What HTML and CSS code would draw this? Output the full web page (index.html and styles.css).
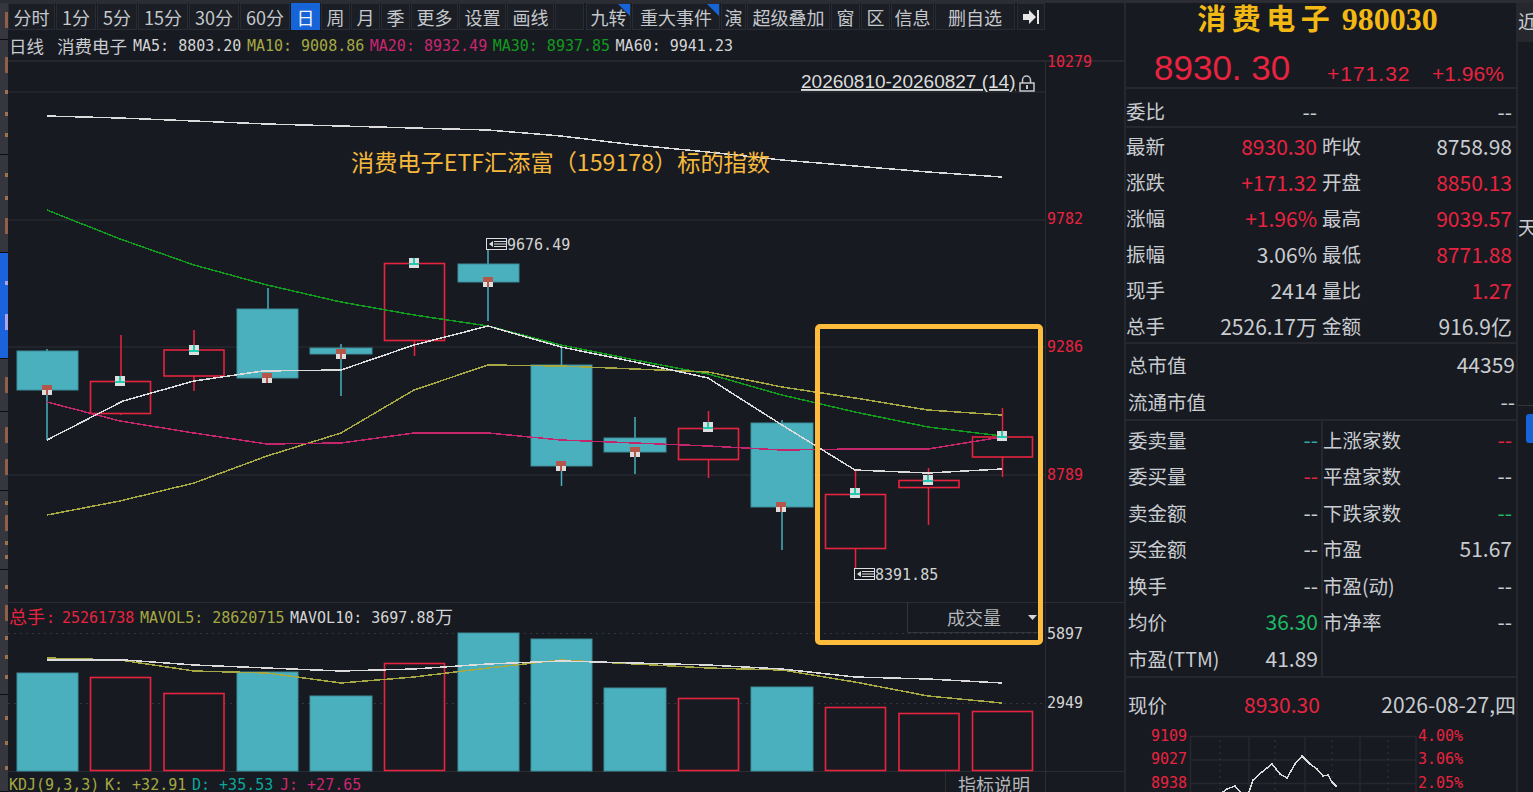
FILE: index.html
```html
<!DOCTYPE html>
<html>
<head>
  <title>消费电子 980030</title>
  <link rel="stylesheet" href="styles.css">
</head>
<body>
<div class="app">

  <div class="side">
    <div class="tab"><i class="lg"></i></div>
    <div class="tab"><i class="lg"></i><i></i><i></i><i></i></div>
    <div class="tab"><i></i><i></i><i class="lg"></i></div>
    <div class="tab active"><i></i><i class="lg"></i></div>
    <div class="tab"><i class="lg"></i></div>
    <div class="tab"><i class="lg"></i><i class="lg"></i></div>
    <div class="tab"><i></i><i class="lg"></i><i></i><i></i></div>
    <div class="tab"><i></i><i class="lg"></i><i></i><i></i><i></i></div>
    <div class="tab"><i></i><i></i><i></i></div>
  </div>

  <div class="main">
    <div class="toolbar">
      <span class="btn">分时</span>
      <span class="btn num">1分</span>
      <span class="btn num">5分</span>
      <span class="btn num">15分</span>
      <span class="btn num">30分</span>
      <span class="btn num">60分</span>
      <span class="btn on">日</span>
      <span class="btn">周</span>
      <span class="btn">月</span>
      <span class="btn">季</span>
      <span class="btn">更多</span>
      <span class="btn">设置</span>
      <span class="btn">画线</span>
      <span class="btn blank"></span>
      <span class="btn flag">九转</span>
      <span class="btn flag event">重大事件</span>
      <span class="btn tight">演</span>
      <span class="btn">超级叠加</span>
      <span class="btn">窗</span>
      <span class="btn">区</span>
      <span class="btn tight">信息</span>
      <span class="btn fav">删自选</span>
      <span class="btn arrow">
        <svg width="18" height="16" viewBox="0 0 18 16"><path d="M1 5h6V1l7 7-7 7v-4H1z" fill="#e6e6e6"/><rect x="15" y="1" width="2" height="14" fill="#e6e6e6"/></svg>
      </span>
    </div>

    <div class="quote-row">
      <span class="cn">日线</span>
      <span class="cn name">消费电子</span>
      <span class="ma white">MA5: 8803.20</span>
      <span class="ma olive">MA10: 9008.86</span>
      <span class="ma pink">MA20: 8932.49</span>
      <span class="ma green">MA30: 8937.85</span>
      <span class="ma white">MA60: 9941.23</span>
    </div>

    <div class="chart">
      <svg class="plot" width="1116" height="730" viewBox="8 62 1116 730">
        <defs>
          <g id="mk-dn"><rect width="10" height="10" fill="#dedede"/><rect width="10" height="5" fill="#b4574a"/><rect x="4" y="5" width="2" height="5" fill="#b4574a"/></g>
          <g id="mk-up"><rect width="10" height="10" fill="#dedede"/><rect y="5" width="10" height="2" fill="#1dcdb0"/><rect x="4" width="2" height="6" fill="#1dcdb0"/></g>
          <g id="mk-ext"><rect x=".5" y=".5" width="20" height="11" fill="#171a21" stroke="#dedede"/><path d="M8 6h12M8 3.500h12M8 8.500h12" stroke="#dedede"/><path d="M3 6l4-3v6z" fill="#dedede"/></g>
        </defs>

        <!-- grid -->
        <path class="grid" d="M8 92H1045M8 220H1045M8 347H1045M8 475H1045"/>
        <path class="divider" d="M8 602.500H1124M8 771.500H1124M1045.500 62V792M945.500 772V792"/>
        <path class="dots" d="M8 633.500H1045M8 703.500H1045"/>

        <!-- price axis -->
        <text class="mono red" x="1047" y="67">10279</text>
        <text class="mono red" x="1047" y="224">9782</text>
        <text class="mono red" x="1047" y="352">9286</text>
        <text class="mono red" x="1047" y="480">8789</text>
        <text class="mono white" x="1047" y="639">5897</text>
        <text class="mono white" x="1047" y="708">2949</text>

        <!-- wicks -->
        <path class="wick-t" d="M47 349V440M268 288V378M341 344V396M488 249V321M561.500 345V486M635 417V474M782 420V550"/>
        <path class="wick-r" d="M121 335V415M194 330V391M414.500 258V356M708.500 411V478M855.500 470V575M928.500 468V525M1002.500 408V477"/>

        <!-- down candles -->
        <rect class="c-t" x="17" y="351" width="61" height="39"/>
        <rect class="c-t" x="237" y="309" width="61" height="69"/>
        <rect class="c-t" x="310" y="348" width="62" height="6"/>
        <rect class="c-t" x="458" y="264" width="61" height="18"/>
        <rect class="c-t" x="531" y="365" width="61" height="101"/>
        <rect class="c-t" x="604" y="438" width="62" height="14"/>
        <rect class="c-t" x="751" y="423" width="62" height="84"/>

        <!-- up candles -->
        <rect class="c-r" x="90.500" y="381.500" width="60" height="32"/>
        <rect class="c-r" x="164" y="350" width="60" height="26"/>
        <rect class="c-r" x="384.500" y="263.500" width="60" height="77"/>
        <rect class="c-r" x="678.500" y="428.500" width="60" height="31"/>
        <rect class="c-r" x="825.500" y="494.500" width="60" height="54"/>
        <rect class="c-r" x="899" y="480.500" width="60" height="7"/>
        <rect class="c-r" x="972.500" y="437" width="60" height="20"/>

        <!-- moving averages -->
        <polyline class="l-white" points="47,116 120,118 194,121 267,124 341,126 414,128 488,130 561,136 635,145 708,152 782,160 855,166 928,172 1002,177"/>
        <polyline class="l-green" points="47,210 120,239 194,265 267,285 341,302 414,315 488,326 561,345 635,360 708,374 782,395 855,412 928,427 1002,436"/>
        <polyline class="l-olive" points="47,515 120,501 194,483 267,456 341,433 414,390 488,365 561,366 635,369 708,372 782,387 855,398 928,410 1002,415"/>
        <polyline class="l-pink" points="47,402 120,421 194,433 267,444 341,443 414,433 488,433 561,440 635,443 708,446 782,450 855,449 928,449 1002,437"/>
        <polyline class="l-white" points="47,440 123,401 194,381 263,371 341,370 414,345 488,326 561,347 635,362 708,378 782,425 855,470 928,473 1002,469"/>

        <!-- close markers -->
        <use href="#mk-dn" x="42" y="385"/>
        <use href="#mk-up" x="115" y="376"/>
        <use href="#mk-up" x="189" y="345"/>
        <use href="#mk-dn" x="262" y="373"/>
        <use href="#mk-dn" x="336" y="349"/>
        <use href="#mk-up" x="409" y="258"/>
        <use href="#mk-dn" x="483" y="277"/>
        <use href="#mk-dn" x="556" y="461"/>
        <use href="#mk-dn" x="630" y="447"/>
        <use href="#mk-up" x="703" y="422"/>
        <use href="#mk-dn" x="776" y="502"/>
        <use href="#mk-up" x="850" y="488"/>
        <use href="#mk-up" x="923" y="475"/>
        <use href="#mk-up" x="997" y="431"/>

        <!-- high and low -->
        <use href="#mk-ext" x="486" y="238"/>
        <text class="mono white" x="507" y="250">9676.49</text>
        <use href="#mk-ext" x="854" y="568"/>
        <text class="mono white" x="875" y="580">8391.85</text>

        <!-- range -->
        <text class="range" x="801" y="88">20260810-20260827 (14)</text>
        <path d="M1022.500 83v-3a4 4 0 0 1 8 0v3" fill="none" stroke="#c8c8c8" stroke-width="1.500"/>
        <rect x="1020" y="83" width="14" height="8" fill="none" stroke="#c8c8c8" stroke-width="1.500"/>
        <rect x="1026" y="85" width="2" height="4" fill="#c8c8c8"/>

        <!-- volume -->
        <text class="cjk red" x="9" y="624">总手</text>
        <text class="mono red" x="46" y="623">:</text>
        <text class="mono red" x="62" y="623">25261738</text>
        <text class="mono olive" x="140" y="623">MAVOL5: 28620715</text>
        <text class="mono white" x="290" y="623">MAVOL10: 3697.88</text>
        <text class="cjk white" x="435" y="624">万</text>

        <path class="vol-box" d="M907.500 602V632.500H1040"/>
        <text class="cjk gray" x="947" y="625">成交量</text>
        <path d="M1028 615h9l-4.500 5z" fill="#d6d6d6"/>

        <rect class="c-t" x="17" y="673" width="61" height="98"/>
        <rect class="c-r" x="90.500" y="677.500" width="60" height="93"/>
        <rect class="c-r" x="164" y="693.500" width="60" height="77"/>
        <rect class="c-t" x="237" y="672" width="61" height="99"/>
        <rect class="c-t" x="310" y="696" width="62" height="75"/>
        <rect class="c-r" x="384.500" y="663.500" width="60" height="107"/>
        <rect class="c-t" x="458" y="633" width="61" height="138"/>
        <rect class="c-t" x="531" y="639" width="61" height="132"/>
        <rect class="c-t" x="604" y="688" width="62" height="83"/>
        <rect class="c-r" x="678.500" y="698.500" width="60" height="72"/>
        <rect class="c-t" x="751" y="687" width="62" height="84"/>
        <rect class="c-r" x="825.500" y="707.500" width="60" height="63"/>
        <rect class="c-r" x="899" y="713.500" width="60" height="57"/>
        <rect class="c-r" x="972.500" y="711.500" width="60" height="59"/>

        <polyline class="l-olive" points="47,658 120,660 194,671 267,673 341,683 414,677 488,668 561,660 635,664 708,668 782,670 855,682 928,696 1002,703"/>
        <polyline class="l-white" points="47,660 125,660 194,665 267,668 341,671 414,669 488,664 561,661 635,663 708,665 782,669 855,677 928,679 1002,683"/>

        <!-- kdj -->
        <text class="mono olive" x="9" y="790">KDJ(9,3,3)</text>
        <text class="mono olive" x="105" y="790">K: +32.91</text>
        <text class="mono teal" x="192" y="790">D: +35.53</text>
        <text class="mono pink" x="280" y="790">J: +27.65</text>
        <text class="cjk gray" x="958" y="792">指标说明</text>
      </svg>

      <div class="note">消费电子ETF汇添富（159178）标的指数</div>
      <div class="mark-box"></div>
    </div>
  </div>

  <div class="panel">
    <div class="head">
      <div class="title"><span class="title-cn">消费电子</span> <b>980030</b></div>
      <div class="price">
        <span class="big">8930. 30</span>
        <span class="chg">+171.32</span>
        <span class="chg pct">+1.96%</span>
      </div>
    </div>

    <div class="block ratio">
      <div class="row"><span>委比</span><em class="dash">--</em></div>
      <div class="row"><span></span><em class="dash">--</em></div>
    </div>

    <div class="block quotes">
      <div class="row"><span>最新</span><em class="up">8930.30</em></div>
      <div class="row"><span>昨收</span><em>8758.98</em></div>
      <div class="row"><span>涨跌</span><em class="up">+171.32</em></div>
      <div class="row"><span>开盘</span><em class="up">8850.13</em></div>
      <div class="row"><span>涨幅</span><em class="up">+1.96%</em></div>
      <div class="row"><span>最高</span><em class="up">9039.57</em></div>
      <div class="row"><span>振幅</span><em>3.06%</em></div>
      <div class="row"><span>最低</span><em class="up">8771.88</em></div>
      <div class="row"><span>现手</span><em>2414</em></div>
      <div class="row"><span>量比</span><em class="up">1.27</em></div>
      <div class="row"><span>总手</span><em>2526.17万</em></div>
      <div class="row"><span>金额</span><em>916.9亿</em></div>
    </div>

    <div class="block cap">
      <div class="row"><span>总市值</span><em>44359</em></div>
      <div class="row"><span>流通市值</span><em class="dash">--</em></div>
    </div>

    <div class="block detail">
      <div class="col">
        <div class="row"><span>委卖量</span><em class="dash tl">--</em></div>
        <div class="row"><span>委买量</span><em class="dash up">--</em></div>
        <div class="row"><span>卖金额</span><em class="dash">--</em></div>
        <div class="row"><span>买金额</span><em class="dash">--</em></div>
        <div class="row"><span>换手</span><em class="dash">--</em></div>
        <div class="row"><span>均价</span><em class="gr">36.30</em></div>
        <div class="row"><span>市盈(TTM)</span><em>41.89</em></div>
      </div>
      <div class="col last">
        <div class="row"><span>上涨家数</span><em class="dash up">--</em></div>
        <div class="row"><span>平盘家数</span><em class="dash">--</em></div>
        <div class="row"><span>下跌家数</span><em class="dash gr">--</em></div>
        <div class="row"><span>市盈</span><em>51.67</em></div>
        <div class="row"><span>市盈(动)</span><em class="dash">--</em></div>
        <div class="row"><span>市净率</span><em class="dash">--</em></div>
      </div>
    </div>

    <div class="now">
      <span>现价</span>
      <em class="up">8930.30</em>
      <em class="date">2026-08-27,四</em>
    </div>

    <svg class="mini" width="390" height="68" viewBox="1126 725 390 68">
      <path class="grid" d="M1190 734.500H1416M1190 758H1416M1190 781.500H1416M1190.500 734V792M1249 734V792M1305 734V792M1360 734V792M1416 734V792"/>
      <path class="mini-dots" d="M1220 738V792M1275 738V792M1332 738V792M1388 738V792"/>
      <polyline class="l-white" points="1220,792 1227,787 1235,784 1240,790 1245,792 1249,790 1253,778 1262,770 1272,762 1280,772 1287,776 1295,762 1302,754 1310,762 1317,767 1323,774 1328,773 1332,780 1337,785"/>
      <text class="mono red" x="1151" y="739">9109</text>
      <text class="mono red" x="1151" y="762">9027</text>
      <text class="mono red" x="1151" y="786">8938</text>
      <text class="mono red" x="1418" y="739">4.00%</text>
      <text class="mono red" x="1418" y="762">3.06%</text>
      <text class="mono red" x="1418" y="786">2.05%</text>
    </svg>
  </div>

  <div class="far">
    <div class="far-top">近</div>
    <div class="far-mid">天</div>
    <div class="far-pill"></div>
  </div>

</div>
</body>
</html>
```

FILE: styles.css
```css
body {
    margin: 0;
    background: #171a21;
    color: #c9ccd0;
    font-family: "Noto Sans CJK SC", "Noto Sans", sans-serif;
    overflow: hidden;
}

.app {
    display: flex;
    height: 792px;
    width: 1533px;
    overflow: hidden;
    border-top: 3px solid #2c2d33;
    box-sizing: border-box;
}

em {
    font-style: normal;
}

/* left tabs */
.side {
    width: 8px;
    flex: none;
    margin-top: -3px;
    height: 792px;
    display: grid;
    grid-template-rows: 40px 115px 98px 106px 53px 79px 79px 125px 97px;
}

.tab {
    display: flex;
    flex-direction: column;
    align-items: flex-end;
    justify-content: space-evenly;
    background: #35363e;
    border-bottom: 1px solid #0c0d10;
    box-sizing: border-box;
}

.tab i {
    width: 3px;
    height: 4px;
    background: #9c7250;
}

.tab i.lg {
    height: 16px;
    background: #8f5f48;
}

.tab.active {
    background: #1a63dc;
}

.tab.active i {
    background: #a9a4f0;
}

/* toolbar */
.main {
    width: 1116px;
    flex: none;
    display: flex;
    flex-direction: column;
}

.toolbar {
    display: flex;
    gap: 1px;
    height: 27px;
}

.btn {
    position: relative;
    display: flex;
    align-items: center;
    justify-content: center;
    box-sizing: border-box;
    height: 27px;
    padding: 0 4.5px;
    background: #1b1e25;
    border: 1px solid #292c32;
    font-size: 18px;
    line-height: 1;
    color: #c4c8cc;
}

.btn.num {
    padding: 0 5px;
}

.btn.on {
    background: #1764d8;
    border-color: #1764d8;
    color: #f0f4fa;
}

.btn.blank {
    width: 29px;
    margin-right: 1px;
}

.btn.flag {
    padding: 0 3.500px;
}

.btn.flag::after {
    content: "";
    position: absolute;
    top: 0;
    right: 0;
    border-top: 12px solid #1764d8;
    border-left: 12px solid transparent;
}

.btn.flag.event {
    padding: 0 7px;
}

.btn.tight {
    padding: 0 2.500px;
}

.btn.fav {
    padding: 0 12px;
    margin-right: 1px;
}

.btn.arrow {
    width: 28px;
    padding: 0;
}

/* ma row */
.quote-row {
    display: flex;
    align-items: center;
    height: 32px;
    padding: 1px 0 0 1px;
    box-sizing: border-box;
    border-bottom: 2px solid #26282e;
    font-family: "DejaVu Sans Mono", monospace;
    font-size: 15px;
    white-space: nowrap;
}

.quote-row .cn {
    font-family: "Noto Sans CJK SC", sans-serif;
    font-size: 17.500px;
    color: #c9ccd0;
}

.quote-row .name {
    margin-left: 13px;
    margin-right: 6px;
}

.ma {
    margin-right: 5.500px;
}

.ma.white { color: #d4d4d4; }
.ma.olive { color: #a5a843; }
.ma.pink { color: #cb2670; }
.ma.green { color: #119a1e; }

/* chart */
.chart {
    position: relative;
    flex: 1;
}

.plot {
    display: block;
    overflow: visible;
}

.grid {
    fill: none;
    stroke: #26282e;
    stroke-width: 1.500;
}

.divider {
    fill: none;
    stroke: #2b2d33;
    stroke-width: 1;
}

.dots {
    fill: none;
    stroke: #33363c;
    stroke-dasharray: 2 4;
}

.vol-box {
    fill: none;
    stroke: #33353b;
}

.mono {
    font-family: "DejaVu Sans Mono", monospace;
    font-size: 15px;
}

.cjk {
    font-family: "Noto Sans CJK SC", sans-serif;
    font-size: 18px;
}

.range {
    font-family: "Liberation Sans", sans-serif;
    font-size: 19px;
    fill: #dcdcdc;
    text-decoration: underline;
}

.red { fill: #e8233f; }
.white { fill: #d4d4d4; }
.gray { fill: #b4b6b8; }
.olive { fill: #a5a843; }
.pink { fill: #cb2670; }
.teal { fill: #0ba79a; }

.wick-t {
    fill: none;
    stroke: #4bb0be;
    stroke-width: 1.500;
}

.wick-r {
    fill: none;
    stroke: #e8233f;
    stroke-width: 1.500;
}

.c-t {
    fill: #4bb0be;
    stroke: #3d8e99;
    stroke-width: 1;
}

.c-r {
    fill: #171a21;
    stroke: #e8233f;
    stroke-width: 1.600;
}

polyline {
    fill: none;
    stroke-width: 1.500;
    shape-rendering: crispEdges;
}

.l-white { stroke: #dcdcdc; }
.l-green { stroke: #119a1e; }
.l-olive { stroke: #a5a843; }
.l-pink { stroke: #c4266c; }

.note {
    position: absolute;
    left: 343px;
    top: 83px;
    font-size: 23.200px;
    line-height: 32px;
    color: #f5b83d;
    white-space: nowrap;
}

.mark-box {
    position: absolute;
    left: 807px;
    top: 262px;
    width: 228px;
    height: 321px;
    box-sizing: border-box;
    border: 5.500px solid #fdbc3c;
    border-radius: 5px;
}

/* right panel */
.panel {
    width: 394px;
    flex: none;
    box-sizing: border-box;
    border-left: 2px solid #26282e;
    border-right: 2px solid #26282e;
    font-size: 19.500px;
    line-height: 1;
}

.head {
    height: 86px;
    border-bottom: 2px solid #26282e;
    box-sizing: border-box;
}

.title {
    height: 29px;
    line-height: 29px;
    text-align: center;
    font-size: 29px;
    font-weight: 700;
    color: #f2b914;
    padding-right: 7px;
    white-space: nowrap;
}

.title-cn {
    letter-spacing: 5.500px;
}

.title b {
    font-family: "Liberation Serif", serif;
    font-size: 32px;
}

.price {
    display: flex;
    align-items: baseline;
    padding: 18px 0 0 28px;
    color: #e8233f;
}

.big {
    flex: none;
    font-family: "Liberation Sans", sans-serif;
    font-size: 35px;
    width: 173px;
}

.chg {
    flex: none;
    font-family: "Liberation Sans", sans-serif;
    font-size: 21px;
    letter-spacing: 1px;
    width: 105px;
    position: relative;
    top: 1px;
}

.chg.pct {
    letter-spacing: 0;
}

.row {
    display: flex;
    justify-content: space-between;
    align-items: center;
    white-space: nowrap;
}

.row em {
    font-size: 21px;
}

.ratio {
    display: grid;
    grid-template-columns: 196px 192px;
    height: 34px;
    border-bottom: 2px solid #26282e;
    padding-top: 3px;
}

.ratio .row {
    height: 38px;
    padding-right: 5px;
}

.ratio .row + .row {
    padding-right: 2px;
}

.quotes {
    display: grid;
    grid-template-columns: 196px 192px;
    grid-auto-rows: 36px;
    height: 214px;
    border-bottom: 2px solid #26282e;
}

.quotes .row {
    padding-right: 5px;
}

.quotes .row:nth-child(even) {
    padding-right: 2px;
}

.cap {
    padding: 2px 1px 0 2px;
    height: 73px;
    border-bottom: 2px solid #26282e;
}

.cap .row {
    height: 37px;
}

.detail {
    display: grid;
    grid-template-columns: 197px 191px;
    height: 257px;
    box-sizing: border-box;
    border-bottom: 2px solid #26282e;
}

.col {
    padding: 0 3px 0 2px;
    border-right: 2px solid #26282e;
}

.col.last {
    border-right: 0;
    padding: 0 2px 0 0;
}

.col .row {
    height: 36.500px;
}

.now {
    display: flex;
    align-items: center;
    height: 49px;
    padding: 4px 0 0 2px;
    box-sizing: border-box;
    white-space: nowrap;
}

.now em {
    font-size: 21px;
}

.now .up {
    margin-left: 77px;
}

.now .date {
    margin-left: auto;
}

.mini {
    display: block;
}

.mini-dots {
    fill: none;
    stroke: #33363c;
    stroke-dasharray: 2 4;
}

.up { color: #e8233f; }
.tl { color: #35a7ad; }
.gr { color: #1db964; }

/* far right */
.far {
    flex: 1;
    position: relative;
    overflow: hidden;
    font-size: 19px;
    line-height: 1;
}

.far-top {
    height: 39px;
    background: #26282e;
    padding-top: 8px;
    box-sizing: border-box;
}

.far-mid {
    padding-top: 175px;
    height: 364px;
    box-sizing: border-box;
    border-bottom: 1px solid #33353b;
}

.far-pill {
    position: absolute;
    left: 8px;
    top: 411px;
    width: 12px;
    height: 29px;
    border-radius: 3px;
    background: #1764d8;
}
```
